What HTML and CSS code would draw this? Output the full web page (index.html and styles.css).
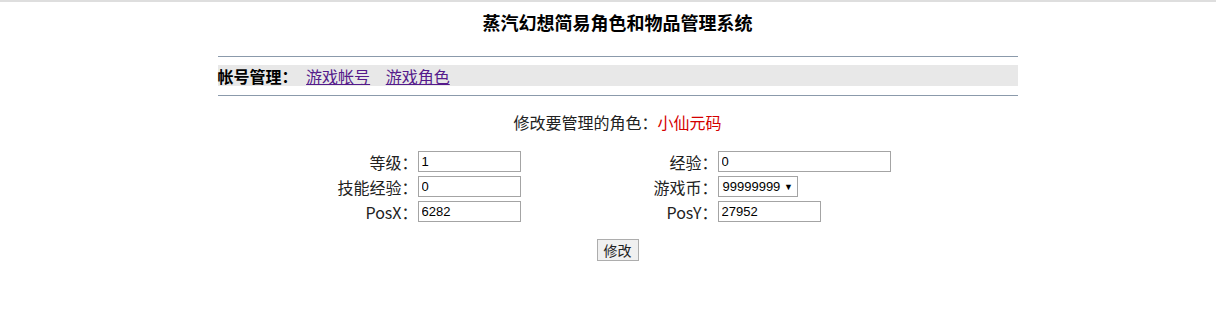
FILE: index.html
```html
<!DOCTYPE html>
<html lang="zh-CN">
<head>
<meta charset="UTF-8">
<title>蒸汽幻想简易角色和物品管理系统</title>
<link rel="stylesheet" href="styles.css">
</head>
<body>
<div class="outer">
  <div class="page">
    <h1 class="title">蒸汽幻想简易角色和物品管理系统</h1>
    <div class="rule"></div>
    <div class="menu">
      <b>帐号管理：</b>
      <a href="#">游戏帐号</a>
      <a href="#">游戏角色</a>
    </div>
    <div class="rule rule-low"></div>

    <p class="current">修改要管理的角色：<span class="role-name">小仙元码</span></p>

    <form class="role-form" onsubmit="return false;">
      <div class="grid">
        <label>等级：</label>
        <div><input type="text" value="1" class="w-short"></div>
        <label>经验：</label>
        <div><input type="text" value="0" class="w-long"></div>

        <label>技能经验：</label>
        <div><input type="text" value="0" class="w-short"></div>
        <label>游戏币：</label>
        <div><span class="select">99999999 <i>▼</i></span></div>

        <label>PosX：</label>
        <div><input type="text" value="6282" class="w-short"></div>
        <label>PosY：</label>
        <div><input type="text" value="27952" class="w-short"></div>
      </div>
      <div class="actions">
        <button type="submit">修改</button>
      </div>
    </form>
  </div>
</div>
</body>
</html>
```

FILE: styles.css
```css
body {
  margin: 0;
  border-top: 2px solid #dedede;
  font-family: "Microsoft YaHei", "Noto Sans CJK SC", sans-serif;
  color: #000;
  background: #fff;
}

.outer {
  padding-left: 19px;
}

.page {
  width: 800px;
  margin: 0 auto;
}

.title {
  margin: 0;
  padding-top: 8px;
  font-size: 18px;
  line-height: 24px;
  font-weight: bold;
  text-align: center;
}

.rule {
  height: 0;
  border-top: 1px solid #8b9aab;
  margin-top: 22px;
}

.rule-low {
  margin-top: 9px;
}

.menu {
  margin-top: 8px;
  height: 21px;
  line-height: 22px;
  background-color: #e8e8e8;
  font-size: 16px;
}

.menu b {
  margin-right: 5px;
}

.menu a {
  color: #551a8b;
  margin-right: 12px;
}

.current {
  margin: 16px 0 0;
  font-size: 16px;
  line-height: 20px;
  text-align: center;
  color: #222;
}

.role-name {
  color: #d40000;
}

.role-form {
  margin-top: 17px;
}

.grid {
  display: grid;
  grid-template-columns: 196px 196px 96px auto;
  grid-auto-rows: 25px;
  column-gap: 4px;
  align-items: center;
}

.grid label {
  text-align: right;
  margin-right: -4px;
  font-size: 16px;
  line-height: 20px;
  color: #222;
}

.grid > div {
  display: flex;
  align-items: center;
}

.grid input {
  box-sizing: border-box;
  height: 21px;
  margin: 0;
  padding: 0 3px;
  border: 1px solid #a4a4a4;
  font-family: "Liberation Sans", Arial, sans-serif;
  font-size: 13px;
  color: #000;
}

.w-short {
  width: 103px;
}

.w-long {
  width: 173px;
}

.select {
  box-sizing: border-box;
  display: inline-block;
  width: 80px;
  height: 21px;
  line-height: 19px;
  padding-left: 4px;
  border: 1px solid #a4a4a4;
  font-family: "Liberation Sans", Arial, sans-serif;
  font-size: 13px;
}

.select i {
  font-style: normal;
  font-size: 9px;
  vertical-align: 1px;
}

.actions {
  margin-top: 13px;
  text-align: center;
}

.actions button {
  height: 22px;
  padding: 0 6px;
  background-color: #f0f0f0;
  border: 1px solid #adadad;
  border-radius: 0;
  font-family: "Microsoft YaHei", "Noto Sans CJK SC", sans-serif;
  font-size: 14px;
  line-height: 20px;
  color: #222;
}
```
